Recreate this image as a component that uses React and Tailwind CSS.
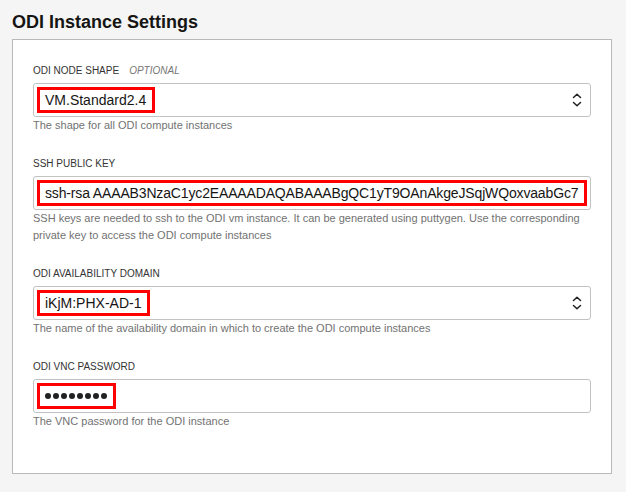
import React from "react";

function Chevrons() {
  return (
    <svg width="10" height="14" viewBox="0 0 10 14" fill="none" stroke="#222" strokeWidth="1.5" strokeLinecap="round" strokeLinejoin="round">
      <path d="M1.5 4.5 L5 1.2 L8.5 4.5" />
      <path d="M1.5 9.5 L5 12.8 L8.5 9.5" />
    </svg>
  );
}

function Field({ label, optional, help, children }) {
  return (
    <div className="flex flex-col">
      <div className="h-[16px] leading-[16px] text-[10px] text-[#333] uppercase mb-[4px] flex items-center">
        <span>{label}</span>
        {optional && <span className="ml-[10px] italic text-[#767676]">Optional</span>}
      </div>
      {children}
      <div className="text-[11px] leading-[17px] text-[#727272]">{help}</div>
    </div>
  );
}

function Box({ select, children }) {
  return (
    <div className="h-[34px] border border-[#c2c2c2] rounded-[3px] bg-white flex items-center pl-[3px] pr-[8px]">
      <div className="flex-1 min-w-0 flex items-center">{children}</div>
      {select && (
        <div className="ml-2 flex items-center">
          <Chevrons />
        </div>
      )}
    </div>
  );
}

function Red({ full, children }) {
  return (
    <div
      className={
        "h-[26px] border-[3px] border-[#ff0000] flex items-center pl-[5px] pr-[6px] text-[14px] text-[#161513] whitespace-nowrap overflow-hidden " +
        (full ? "flex-1" : "")
      }
    >
      {children}
    </div>
  );
}

export default function App() {
  return (
    <div
      className="w-[626px] h-[492px] bg-[#f5f5f5] pl-[12px] pt-[10px] overflow-hidden"
      style={{ fontFamily: '"Liberation Sans", Arial, sans-serif' }}
    >
      <h1 className="text-[18px] leading-[24px] font-bold text-[#161513] mb-[5px]">ODI Instance Settings</h1>
      <div className="w-[600px] bg-white border border-[#b9b9b9] pt-[23px] pb-[43px] px-[20px] flex flex-col gap-[22px]">
        <Field label="ODI Node Shape" optional help="The shape for all ODI compute instances">
          <Box select>
            <Red>VM.Standard2.4</Red>
          </Box>
        </Field>
        <Field
          label="SSH Public Key"
          help={
            <>
              SSH keys are needed to ssh to the ODI vm instance. It can be generated using puttygen. Use the corresponding
              <br />
              private key to access the ODI compute instances
            </>
          }
        >
          <div className="h-[34px] border border-[#c2c2c2] rounded-[3px] bg-white flex items-center px-[3px]">
            <Red full>
              <span className="tracking-[-0.15px]">ssh-rsa AAAAB3NzaC1yc2EAAAADAQABAAABgQC1yT9OAnAkgeJSqjWQoxvaabGc7</span>
            </Red>
          </div>
        </Field>
        <Field label="ODI Availability Domain" help="The name of the availability domain in which to create the ODI compute instances">
          <Box select>
            <Red>iKjM:PHX-AD-1</Red>
          </Box>
        </Field>
        <Field label="ODI VNC Password" help="The VNC password for the ODI instance">
          <Box>
            <Red>
              <div className="flex gap-[2px] items-center" aria-label="password">
                {Array.from({ length: 8 }).map((_, i) => (
                  <span key={i} className="w-[6px] h-[6px] rounded-full bg-[#222]" />
                ))}
              </div>
            </Red>
          </Box>
        </Field>
      </div>
    </div>
  );
}
